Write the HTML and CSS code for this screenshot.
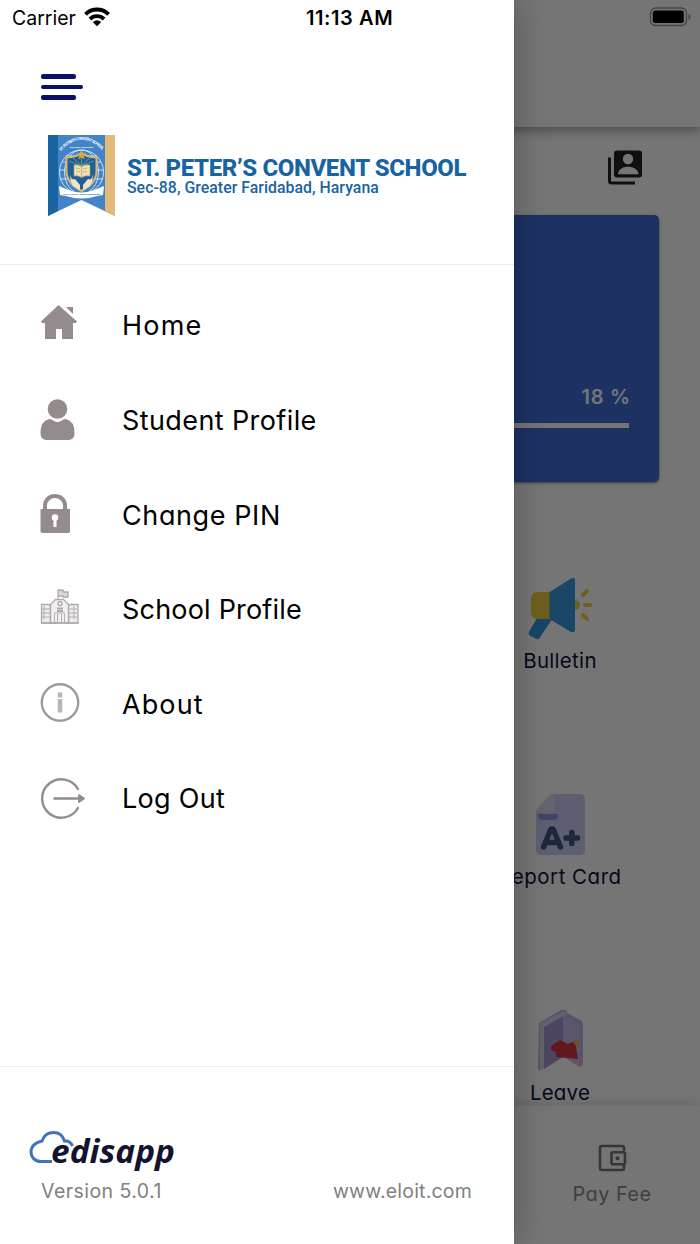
FILE: index.html
```html
<!DOCTYPE html>
<html lang="en">
<head>
  <meta charset="UTF-8">
  <meta name="viewport" content="width=device-width, initial-scale=1.0">
  <title>St. Peter's Convent School</title>
  <link rel="stylesheet" href="styles.css">
</head>
<body>
  <div class="screen">
    <!-- Dashboard -->
    <main class="dashboard">
      <header class="app-bar"></header>
      <div class="toolbar">
        <svg class="contacts" width="36" height="36" viewBox="0 0 36 36">
          <path d="M2.500 7.500V31a2 2 0 0 0 2 2H28" fill="none" stroke="#222" stroke-width="3"/>
          <path d="M10 .5h22a3 3 0 0 1 3 3v21a3 3 0 0 1-3 3H10a3 3 0 0 1-3-3v-21a3 3 0 0 1 3-3z" fill="#222"/>
          <circle cx="21" cy="9" r="5.200" fill="#fff"/>
          <path d="M11 24.300c0-5 5-7.500 10-7.500s10.500 2.500 10.500 7.500z" fill="#fff"/>
        </svg>
      </div>
      <section class="attendance">
        <span class="percent">18 %</span>
        <div class="bar"></div>
      </section>
      <section class="tiles">
        <div class="tile">
          <svg width="66" height="64" viewBox="0 0 66 64">
            <path d="M10 41h16L12.500 61q-1 2-3 1l-6-3q-3-2-1-5z" fill="#3498db"/>
            <path d="M11 15h13v27H11q-7 0-7-7V22q0-7 7-7z" fill="#f0d045"/>
            <path d="M22.500 15 44 1.500q4-1.500 4 1.500v50q0 3-4 2L22.500 42z" fill="#3a9be0"/>
            <path d="M48 23a5 5 0 0 1 0 10z" fill="#f0d045"/>
            <path d="M56 18l4-4M58 28h5M56 38l4 4" stroke="#f0d045" stroke-width="4" stroke-linecap="round"/>
          </svg>
          <span class="label bulletin">Bulletin</span>
        </div>
        <div class="tile">
          <svg width="66" height="64" viewBox="0 0 66 64">
            <path d="M24 1h29q5 0 5 5v51q0 5-5 5H14q-5 0-5-5V17z" fill="#cdcdfa"/>
            <path d="M11 21h20v2q0 4-4 4H15q-4 0-4-4z" fill="#9095e8"/>
            <path d="M9 17 24 1h4v14q0 5-5 5H9z" fill="#dadaf2"/>
            <path d="M16.500 54 23.500 37q1.500-2.500 3 0l7 17M20 49.500h10M39 45h11.500M44.800 39.500v11" fill="none" stroke="#3f5a80" stroke-width="5.500" stroke-linecap="round" stroke-linejoin="round"/>
          </svg>
          <span class="label report">Report Card</span>
        </div>
        <div class="tile">
          <svg width="66" height="64" viewBox="0 0 66 64">
            <path d="M12 14 34 1q5-1 6 3l13 7q3 1 3 4v39q0 5-5 3L34 46 15 60q-4 3-4-1z" fill="#c0b2e8"/>
            <path d="M13 15 35 3q4 0 4 3L34 10 17 20v38l-4 3z" fill="#d9d2ee"/>
            <path d="M17 18 36 7v41L17 60z" fill="#a99ad8"/>
            <path d="M36 7l16 8v42L36 46z" fill="#c7bce6"/>
            <path d="M24 37l9-6 8 4 7-3 3 18-22-2V43l-5-2z" fill="#d33443"/>
            <path d="M46 33l6-2v7l-3-1z" fill="#e9bc35"/>
          </svg>
          <span class="label leave">Leave</span>
        </div>
      </section>
      <nav class="bottom-nav">
        <div class="nav-item">
          <svg width="30" height="28" viewBox="0 0 30 28" fill="none" stroke="#777" stroke-width="2.600" stroke-linejoin="round">
            <path d="M27 8V5q0-2-2-2H5Q3 3 3 5v20q0 2 2 2h20q2 0 2-2v-3"/>
            <rect x="14.500" y="9.200" width="13.500" height="12" rx="1.500"/>
            <circle cx="20.500" cy="15.200" r="2" fill="#777" stroke="none"/>
          </svg>
          <span class="pay">Pay Fee</span>
        </div>
      </nav>
    </main>

    <div class="scrim"></div>
    <svg class="battery" width="42" height="20" viewBox="0 0 42 20">
      <rect x="1.500" y="1" width="36" height="17.500" rx="5" fill="none" stroke="#454545" stroke-width="1.300"/>
      <rect x="3.800" y="3.500" width="31" height="12.500" rx="2.500"/>
      <path d="M39.500 7q2 1 2 3t-2 3z" fill="#454545"/>
    </svg>

    <!-- Side menu -->
    <aside class="drawer">
      <div class="status">
        <span class="carrier">Carrier</span>
        <svg class="wifi" width="26" height="20" viewBox="0 0 26 20" fill="none" stroke="#000" stroke-width="3.900">
          <path d="M1.500 7.300a16.300 16.300 0 0 1 23 0"/>
          <path d="M5.900 12a10.200 10.200 0 0 1 14.200 0"/>
          <path d="M8.800 15q4.200-3.500 8.400 0L13 19.200z" fill="#000" stroke="none"/>
        </svg>
        <span class="time">11:13 AM</span>
      </div>
      <div class="drawer-head">
        <div class="burger">
          <i class="short"></i>
          <i></i>
          <i class="short"></i>
        </div>
        <div class="school">
          <svg class="emblem" width="67" height="82" viewBox="0 0 67 82">
            <path d="M0 0h67v81L33.500 65 0 81z" fill="#4384c8"/>
            <path d="M0 0h10v76L0 81z" fill="#1764a0"/>
            <path d="M57 0h10v81l-10-5z" fill="#e0bb7c"/>
            <path id="arc" d="M13 16Q33.500-6.500 55.500 16" fill="none"/>
            <text class="arc-text"><textPath href="#arc" textLength="48">ST. PETER'S CONVENT SCHOOL</textPath></text>
            <text class="arc-sub" x="33.500" y="12.500" text-anchor="middle">GREATER FARIDABAD</text>
            <g fill="none" stroke="#d5e6f6" stroke-width=".9">
              <circle cx="33.500" cy="37" r="22"/>
              <ellipse cx="33.500" cy="37" rx="17" ry="22"/>
              <path d="M12 35h43M14 27h39M18 21h31M12 44h43"/>
            </g>
            <path d="M33.500 18q7 5 15 4v14q0 12-15 20-15-8-15-20V22q8 1 15-4z" fill="#1f609a" stroke="#dcb96f" stroke-width="2"/>
            <path d="M33.500 31 21 26m12.500 5L24 22m9.500 9V21m0 10 9-9m-9 9 12-5" stroke="#8eaa68" stroke-width=".7"/>
            <path d="M33.500 15l1.400 3.300 3.600.2-2.800 2.300 1 3.500-3.200-2-3.200 2 1-3.500-2.800-2.300 3.600-.2z" fill="#d8a93e"/>
            <path d="M26 30q4-1 7.500 1.500Q37 29 42 30v11q-5-1-8.500 1.500Q30 40 26 41z" fill="#eee0b5" stroke="#b99b55" stroke-width=".6"/>
            <path d="M33.500 31.500v11M28 33l4 1M28 36l4 1M35 34l4-1M35 37l4-1" stroke="#b99b55" stroke-width=".6"/>
            <path d="M22 39q1 7 5 5l5 6v5l-7-4q-3-5-3-12zM45 39q-1 7-5 5l-5 6v5l7-4q3-5 3-12z" fill="#f0e5cb"/>
            <path d="M11 51l7 3q15 7 31 0l7-3-1 9-6 1q-15 5-31 0l-6-1z" fill="#fff"/>
            <text class="ribbon" x="33.500" y="60" text-anchor="middle">LIGHT TRUTH AND KNOWLEDGE</text>
          </svg>
          <div class="school-text">
            <div class="school-name">ST. PETER’S CONVENT SCHOOL</div>
            <div class="school-place">Sec-88, Greater Faridabad, Haryana</div>
          </div>
        </div>
      </div>

      <ul class="menu">
        <li>
          <svg width="48" height="48" viewBox="0 0 48 48" fill="#948b8c">
            <path d="M18.500 3 37 19.500l-1 1.500h-3v16H22V27h-6v10H5V21H2l-1-1.500z"/>
            <path d="M26 5h7v7z"/>
          </svg>
          <span class="m-home">Home</span>
        </li>
        <li>
          <svg width="48" height="48" viewBox="0 1 48 48" fill="#948b8c">
            <circle cx="17.500" cy="13" r="9.800"/>
            <path d="M9 23q3 0 5 2 3.500 2 7 0 2-2 5-2 8.500 2 8.500 14 0 7-6 7h-22q-6 0-6-7Q.5 25 9 23z"/>
          </svg>
          <span class="m-student">Student Profile</span>
        </li>
        <li>
          <svg width="48" height="48" viewBox="0 0 48 48" fill="#948b8c">
            <path d="M5 18v-3.500a10 9.500 0 0 1 20 0V18" fill="none" stroke="#948b8c" stroke-width="4"/>
            <path d="M.5 18H30v22q0 2-2 2H2.500q-2 0-2-2z"/>
            <circle cx="15" cy="26.500" r="3.200" fill="#fff"/>
            <path d="M13.500 27h3v9h-3z" fill="#fff"/>
          </svg>
          <span class="m-pin">Change PIN</span>
        </li>
        <li>
          <svg width="48" height="48" viewBox="0 0 48 48" fill="none" stroke="#b0aaaa" stroke-width="1.300">
            <path d="M1.500 18.500h9V37h-9zM28.500 18.500h9.500V37h-9.500z" fill="#eeecec"/>
            <path d="M10.500 37V18.500l5-5h8l5 5V37z" fill="#f1efef"/>
            <path d="M18 13.500V4h5v2h5v5h-5v-1h-5" fill="#ddd9d9"/>
            <path d="M14.500 37V27h10v10M17.500 37V28M21.500 37V28M2 23h8M2 27h8M2 31h8M29 23h8M29 27h8M29 31h8M4 20v13M34 20v13" stroke-width=".9"/>
            <circle cx="20" cy="17.500" r="2"/>
            <path d="M17 22.500h6M17 25h6" stroke-width="2"/>
            <path d="M1 37h37.500"/>
          </svg>
          <span class="m-school">School Profile</span>
        </li>
        <li>
          <svg width="48" height="48" viewBox="0 0 48 48" fill="none" stroke="#a09899">
            <circle cx="20" cy="22.500" r="18.200" stroke-width="2.400"/>
            <path d="M20 12.500v5M20 19v13.500" stroke="#bbb5b5" stroke-width="4.500"/>
          </svg>
          <span class="m-about">About</span>
        </li>
        <li>
          <svg width="48" height="48" viewBox="0 0 48 48" fill="none" stroke="#948b8c" stroke-width="2.400" stroke-linecap="round">
            <path d="M38 14A19.200 19.200 0 1 0 38 33"/>
            <path d="M14.500 23.500H39"/>
            <path d="M39 20v7l5-3.500z" fill="#948b8c" stroke-linejoin="round" stroke-width="1.800"/>
          </svg>
          <span class="m-logout">Log Out</span>
        </li>
      </ul>

      <footer class="drawer-foot">
        <svg class="edisapp" width="150" height="44" viewBox="0 0 150 44">
          <path d="M23 31.500H12C5.500 31.500 2 27 2 22 2 16 7 12 13 11 15 5 19 2.500 24.500 2.500 30 2.500 34 6 35.500 11c4-.5 6.500 1.500 8 5" fill="none" stroke="#4272bb" stroke-width="3"/>
          <text x="22" y="32.500" textLength="124" lengthAdjust="spacingAndGlyphs">edisapp</text>
        </svg>
        <div class="foot-row">
          <span class="version">Version 5.0.1</span>
          <span class="site">www.eloit.com</span>
        </div>
      </footer>
    </aside>
  </div>
</body>
</html>
```

FILE: styles.css
```css
* {
  box-sizing: border-box;
}
body {
  margin: 0;
  font-family: Inter, sans-serif;
  color: #000;
}
.screen {
  position: relative;
  width: 700px;
  height: 1244px;
  overflow: hidden;
  background: #fff;
}
svg {
  display: block;
  flex: none;
  overflow: visible;
}

/* Dashboard under the menu */
.dashboard {
  display: flex;
  flex-direction: column;
  height: 1244px;
}
.app-bar {
  height: 127px;
  box-shadow: 0 2px 12px rgba(0, 0, 0, 0.45);
}
.toolbar {
  display: flex;
  justify-content: flex-end;
  height: 88px;
  padding: 23px 57px 0 0;
}
.attendance {
  display: flex;
  flex-direction: column;
  align-items: flex-end;
  height: 267px;
  margin: 0 41px;
  padding: 169px 28px 0 0;
  border-radius: 5px;
  background: #3f6dd7;
  box-shadow: 0 1px 3px rgba(0, 0, 0, 0.5);
}
.percent {
  height: 39px;
  line-height: 26px;
  font-size: 20px;
  font-weight: 600;
  letter-spacing: 0.8px;
  color: #fff;
}
.bar {
  width: 560px;
  height: 5px;
  margin-right: 2px;
  background: #fff;
}
.tiles {
  flex: none;
  width: 280px;
  height: 624px;
  margin-left: 420px;
  padding-top: 95px;
}
.tile {
  display: flex;
  flex-direction: column;
  align-items: center;
  height: 216px;
}
.label {
  margin-top: 4px;
  line-height: 32px;
  font-size: 20.5px;
  font-feature-settings: "cv11";
  color: #0d1340;
}
.bulletin {
  letter-spacing: 0.3px;
}
.report {
  letter-spacing: 0.5px;
}
.leave {
  letter-spacing: 0.2px;
}
.bottom-nav {
  display: flex;
  justify-content: flex-end;
  position: relative;
  height: 138px;
  background: #fff;
  box-shadow: 0 -2px 12px rgba(0, 0, 0, 0.15);
}
.nav-item {
  display: flex;
  flex-direction: column;
  align-items: center;
  width: 176px;
  padding-top: 37px;
}
.pay {
  margin-top: 7px;
  line-height: 32px;
  font-size: 20px;
  font-feature-settings: "cv11";
  letter-spacing: 0.4px;
  color: #8c8c8c;
}
.scrim {
  position: absolute;
  inset: 0;
  background: rgba(0, 0, 0, 0.54);
}
.battery {
  position: absolute;
  top: 7px;
  left: 649px;
}

/* Side menu */
.drawer {
  position: absolute;
  top: 0;
  left: 0;
  display: flex;
  flex-direction: column;
  width: 514px;
  height: 1244px;
  background: #fff;
  box-shadow: 0 0 32px rgba(0, 0, 0, 0.28);
}
.status {
  display: flex;
  align-items: center;
  height: 36px;
  padding-left: 12px;
  font-size: 19.5px;
}
.wifi {
  margin: -3px 0 0 8px;
}
.time {
  margin-left: 196px;
  font-size: 20px;
  font-weight: 600;
  letter-spacing: 0.6px;
}
.drawer-head {
  height: 229px;
  padding-top: 38px;
  border-bottom: 1px solid #ececec;
}
.burger {
  display: flex;
  flex-direction: column;
  gap: 6px;
  margin-left: 41px;
}
.burger i {
  width: 42px;
  height: 4.5px;
  border-radius: 2px;
  background: #0a0f6c;
}
.burger .short {
  width: 35px;
}
.school {
  display: flex;
  margin: 35px 0 0 48px;
}
.school-text {
  padding: 21px 0 0 12px;
  font-family: Roboto, sans-serif;
  color: #1764a2;
  white-space: nowrap;
}
.school-name {
  line-height: 24px;
  font-size: 24px;
  font-weight: 800;
  letter-spacing: -0.37px;
}
.school-place {
  line-height: 16px;
  font-size: 15.8px;
  font-weight: 500;
  letter-spacing: 0.05px;
}
.arc-text {
  font: bold 4px Roboto, sans-serif;
  fill: #fff;
}
.arc-sub {
  font: bold 2.4px Roboto, sans-serif;
  fill: #fff;
}
.ribbon {
  font: bold 2.5px Roboto, sans-serif;
  fill: #1764a0;
}
.menu {
  flex: 1;
  margin: 0;
  padding: 13.7px 0 0 40px;
  list-style: none;
}
.menu li {
  display: flex;
  align-items: center;
  height: 94.6px;
  font-size: 27px;
  font-feature-settings: "cv11";
}
.menu span {
  margin-left: 34px;
  white-space: nowrap;
}
.m-home {
  letter-spacing: 1.2px;
}
.m-student {
  letter-spacing: 0.4px;
}
.m-pin {
  letter-spacing: 0.6px;
}
.m-school {
  letter-spacing: 0.2px;
}
.m-about {
  letter-spacing: 1.1px;
}
.m-logout {
  letter-spacing: 0.3px;
}
.drawer-foot {
  height: 178px;
  padding: 63px 42px 0 29px;
  border-top: 1px solid #ececec;
}
.edisapp text {
  font: italic 700 33px "Open Sans", sans-serif;
  fill: #12132f;
}
.foot-row {
  display: flex;
  justify-content: space-between;
  margin-top: 4px;
  padding-left: 12px;
  line-height: 26px;
  font-size: 19.5px;
  color: #808080;
}
.version {
  letter-spacing: 0.45px;
}
.site {
  letter-spacing: 0.2px;
}
```
